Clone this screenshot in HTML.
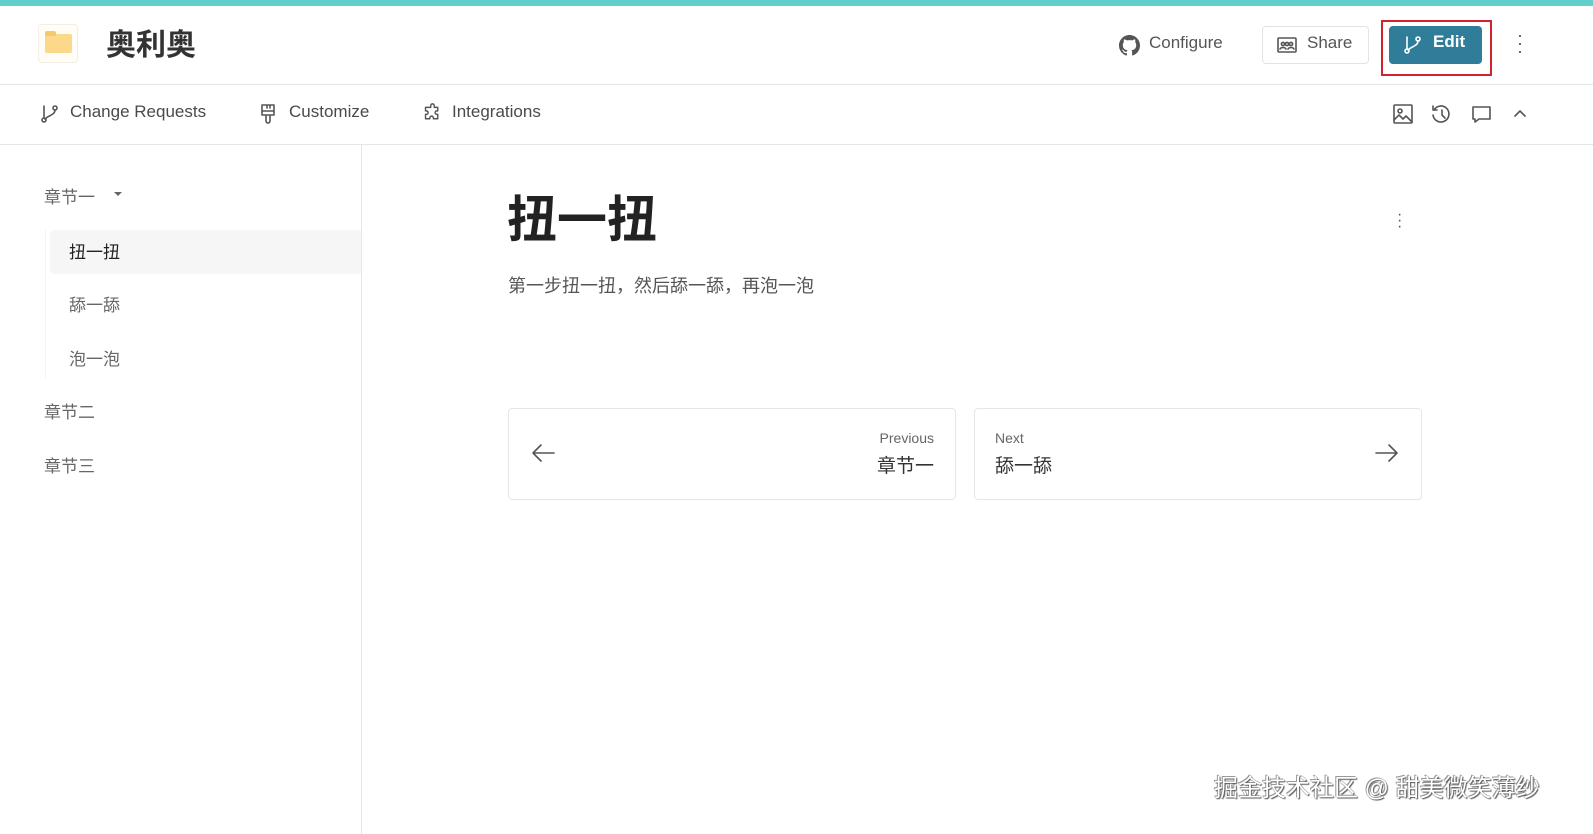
<!DOCTYPE html>
<html><head><meta charset="utf-8"><style>
*{margin:0;padding:0;box-sizing:border-box}
body{width:1593px;height:834px;background:#fff;font-family:"Liberation Sans","Noto Sans CJK SC",sans-serif;color:#3c3c3c;position:relative;overflow:hidden}
.abs{position:absolute}
.top{left:0;top:0;width:1593px;height:6px;background:#63cecb}
.hl{left:0;width:1593px;height:1px;background:#e6e6e6}
svg{position:absolute;fill:none;stroke:#555;stroke-width:1.6;stroke-linecap:round;stroke-linejoin:round}
.t{position:absolute;white-space:nowrap}
.nav{font-size:17px;color:#4a4a4a;top:102px}
.sb{font-size:17px;color:#666}
</style></head><body>
<div class="abs top"></div>
<div class="abs" style="left:38px;top:24px;width:40px;height:39px;border:1px solid #f3efe4;border-radius:4px;background:#fffdf6"></div>
<div class="abs" style="left:45px;top:34px;width:27px;height:19px;background:#fcd98a;border-radius:2px"></div>
<div class="abs" style="left:45px;top:31px;width:11px;height:5px;background:#f6c86a;border-radius:2px 2px 0 0"></div>
<div class="t" style="left:106px;top:20px;font-size:30px;font-weight:bold;color:#333">奥利奥</div>

<svg style="left:1119px;top:35px;fill:#555;stroke:none" width="21" height="21" viewBox="0 0 16 16"><path d="M8 0C3.58 0 0 3.58 0 8c0 3.54 2.29 6.53 5.47 7.59.4.07.55-.17.55-.38 0-.19-.01-.82-.01-1.49-2.01.37-2.53-.49-2.69-.94-.09-.23-.48-.94-.82-1.13-.28-.15-.68-.52-.01-.53.63-.01 1.080.58 1.23.82.72 1.21 1.87.87 2.330.66.07-.52.28-.87.51-1.07-1.78-.2-3.64-.89-3.64-3.95 0-.87.31-1.59.82-2.15-.08-.2-.36-1.020.08-2.12 0 0 .67-.21 2.2.82.64-.18 1.32-.27 2-.27.68 0 1.360.09 2 .27 1.53-1.04 2.2-.82 2.2-.82.44 1.100.16 1.920.08 2.12.51.56.82 1.27.82 2.15 0 3.07-1.87 3.75-3.65 3.95.29.25.54.73.54 1.48 0 1.07-.01 1.93-.01 2.2 0 .21.15.46.55.38A8.013 8.013 0 0016 8c0-4.42-3.58-8-8-8z"/></svg>
<div class="t" style="left:1149px;top:33px;font-size:17px;color:#555">Configure</div>
<div class="abs" style="left:1262px;top:26px;width:107px;height:38px;border:1px solid #e3e3e3;border-radius:4px"></div>
<svg style="left:1277px;top:36px" width="20" height="18" viewBox="0 0 20 18"><rect x="1" y="2" width="18" height="14" rx="1"/><circle cx="6" cy="8" r="1.6"/><circle cx="14" cy="8" r="1.6"/><circle cx="10" cy="8" r="1.6"/><path d="M3 13c1-2 5-2 6 0M11 13c1-2 5-2 6 0"/></svg>
<div class="t" style="left:1307px;top:33px;font-size:17px;color:#555">Share</div>
<div class="abs" style="left:1381px;top:20px;width:111px;height:56px;border:2px solid #d0232b"></div>
<div class="abs" style="left:1389px;top:26px;width:93px;height:38px;background:#2f7d98;border-radius:4px"></div>
<svg style="left:1403px;top:35px;stroke:#fff" width="20" height="20" viewBox="0 0 20 20"><circle cx="4" cy="16" r="2"/><circle cx="15" cy="4" r="2"/><path d="M4 14V2M15 6c0 5-6 5-10 9"/></svg>
<div class="t" style="left:1433px;top:32px;font-size:17px;color:#fff;font-weight:bold">Edit</div>
<div class="t" style="left:1517px;top:31px;font-size:18px;color:#555;line-height:8px;width:6px">·<br>·<br>·</div>
<div class="abs hl" style="top:84px"></div>

<svg style="left:40px;top:104px" width="20" height="20" viewBox="0 0 20 20"><circle cx="4" cy="16" r="2"/><circle cx="15" cy="4" r="2"/><path d="M4 14V2M15 6c0 5-6 5-10 9"/></svg>
<div class="t nav" style="left:70px">Change Requests</div>
<svg style="left:259px;top:103px" width="18" height="22" viewBox="0 0 18 22"><path d="M3 2h12v10H3zM3 8h12M7 12v6a2 2 0 0 0 4 0v-6M8 2v3M11 2v3"/></svg>
<div class="t nav" style="left:289px">Customize</div>
<svg style="left:422px;top:103px" width="21" height="21" viewBox="0 0 24 24"><path d="M10 3a2 2 0 0 1 4 0v2h4v4h-1a2 2 0 0 0 0 4h1v5h-5v-1a2 2 0 0 0-4 0v1H4v-5h1a2 2 0 0 0 0-4H4V5h6z"/></svg>
<div class="t nav" style="left:452px">Integrations</div>

<svg style="left:1393px;top:104px" width="20" height="20" viewBox="0 0 20 20"><rect x="1" y="1" width="18" height="18" rx="1"/><circle cx="7" cy="7" r="2"/><path d="M1 16l5-5 4 4 3-3 6 6"/></svg>
<svg style="left:1431px;top:104px" width="21" height="20" viewBox="0 0 21 20"><path d="M3 6a8 8 0 1 1-1 5M2 2v4h4M11 6v5l3 3"/></svg>
<svg style="left:1471px;top:105px" width="21" height="19" viewBox="0 0 21 19"><path d="M2 2h17v12H8l-4 3v-3H2z"/></svg>
<svg style="left:1513px;top:108px" width="14" height="10" viewBox="0 0 14 10"><path d="M2 8l5-5 5 5"/></svg>
<div class="abs hl" style="top:144px"></div>

<div class="abs" style="left:361px;top:145px;width:1px;height:689px;background:#e6e6e6"></div>
<div class="t sb" style="left:44px;top:183px">章节一</div>
<div class="abs" style="left:114px;top:192px;border-left:4px solid transparent;border-right:4px solid transparent;border-top:4px solid #666"></div>
<div class="abs" style="left:45px;top:230px;width:1px;height:148px;background:#f3f3f3"></div>
<div class="abs" style="left:50px;top:230px;width:311px;height:44px;background:#f6f6f6;border-radius:4px 0 0 4px"></div>
<div class="t sb" style="left:69px;top:238px;color:#222">扭一扭</div>
<div class="t sb" style="left:69px;top:291px">舔一舔</div>
<div class="t sb" style="left:69px;top:345px">泡一泡</div>
<div class="t sb" style="left:44px;top:398px">章节二</div>
<div class="t sb" style="left:44px;top:452px">章节三</div>

<div class="t" style="left:507px;top:180px;font-size:50px;font-weight:bold;color:#222">扭一扭</div>
<div class="t" style="left:1397px;top:212px;font-size:16px;color:#555;line-height:6px;width:6px">·<br>·<br>·</div>
<div class="t" style="left:508px;top:272px;font-size:18px;color:#555">第一步扭一扭，然后舔一舔，再泡一泡</div>

<div class="abs" style="left:508px;top:408px;width:448px;height:92px;border:1px solid #e6e6e6;border-radius:4px"></div>
<svg style="left:530px;top:443px" width="26" height="20" viewBox="0 0 26 20"><path d="M24 10H3M11 2L3 10l8 8"/></svg>
<div class="t" style="left:834px;top:430px;width:100px;text-align:right;font-size:14px;color:#666">Previous</div>
<div class="t" style="left:834px;top:451px;width:100px;text-align:right;font-size:19px;color:#333">章节一</div>
<div class="abs" style="left:974px;top:408px;width:448px;height:92px;border:1px solid #e6e6e6;border-radius:4px"></div>
<div class="t" style="left:995px;top:430px;font-size:14px;color:#666">Next</div>
<div class="t" style="left:995px;top:451px;font-size:19px;color:#333">舔一舔</div>
<svg style="left:1374px;top:443px" width="26" height="20" viewBox="0 0 26 20"><path d="M2 10h21M15 2l8 8-8 8"/></svg>

<div class="t" style="left:1214px;top:768px;font-size:24px;color:#fff;text-shadow:1px 1px 1px #555,-1px -1px 0 #999,0 0 1px #333">掘金技术社区 @ 甜美微笑薄纱</div>
</body></html>
